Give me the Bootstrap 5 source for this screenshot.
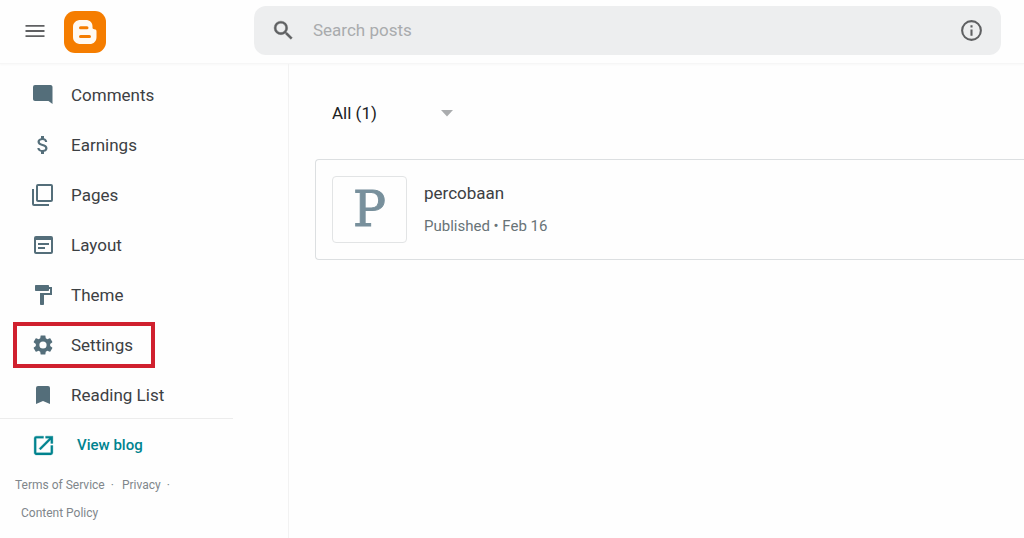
<!DOCTYPE html>
<html lang="en">
<head>
<meta charset="utf-8">
<meta name="viewport" content="width=device-width, initial-scale=1">
<title>Blogger posts</title>
<link href="https://cdn.jsdelivr.net/npm/bootstrap@5.3.0/dist/css/bootstrap.min.css" rel="stylesheet">
<style>
body { font-family: Roboto, sans-serif; font-size: 17px; line-height: 24px; color: #3c4043; background: #fefefe; overflow-x: hidden; }
svg { display: block; fill: currentColor; flex: none; }
.topbar { height: 64px; padding-bottom: 2px; border-bottom: 1px solid #f6f6f6; box-shadow: 0 1px 2px #f8f8f8; }
.brand-area { width: 254px; padding-left: 23px; gap: 17px; }
.topbar .btn { color: #5f6062; }
.logo-link { padding-top: 2px; }
.searchbox { height: 49px; margin-right: 23px; padding: 0 17px; background: #edeeef; border-radius: 12px; color: #5f6062; }
.searchbox input { font-size: 17px; color: #3c4043; margin-left: 17px; }
.searchbox input::placeholder { color: #a9abad; opacity: 1; }
.shell { min-height: calc(100vh - 64px); }
.sidebar { width: 289px; flex: none; border-right: 1px solid #f2f2f2; }
.menu { width: 233px; padding-top: 6px; border-bottom: 1px solid #ececec; }
.menu a { width: fit-content; height: 46px; margin: 2px 0 2px 13px; padding: 0 18px 0 14px; border: 4px solid transparent; gap: 16px; color: #3c4043; }
.menu a:last-child { margin-bottom: 0; }
.menu a.marked { border-color: #d0202e; }
.menu svg { color: #546e7a; }
.view-blog { height: 52px; padding-left: 31px; gap: 21px; color: #00838f; font-size: 15px; font-weight: 500; }
.legal { font-size: 12px; line-height: 28px; color: #80868b; padding-left: 15px; }
.legal a { color: #80868b; }
.legal-part { gap: 6px; }
.legal-last { padding-left: 6px; }
.filter { width: 132px; height: 36px; margin: 31px 0 28px 43px; }
.filter select { appearance: none; color: #202124; padding-right: 24px; }
.filter svg { right: 5px; color: #aaacae; pointer-events: none; }
.post { margin-left: 26px; height: 101px; padding: 16px; gap: 17px; border: 1px solid #dcdfe1; border-right: 0; border-radius: 4px 0 0 4px; color: inherit; }
.post-text { gap: 9px; padding-top: 5px; }
.thumb { width: 75px; height: 67px; border: 1px solid #e2e4e5; border-radius: 4px; font: 49px/1 "DejaVu Serif", serif; color: #78909c; -webkit-text-stroke: 1px #78909c; }
.post-meta { font-size: 15px; color: #687377; }
</style>
</head>
<body>
<header class="topbar d-flex align-items-center">
  <div class="brand-area d-flex align-items-center flex-shrink-0">
    <button type="button" class="btn p-0 border-0" aria-label="Main menu"><svg width="24" height="24" viewBox="0 0 24 24"><path d="M2.500 18h19v-1.800h-19zm0-5.100h19v-1.800h-19zm0-6.900v1.800h19V6z"/></svg></button>
    <a href="#" class="logo-link" aria-label="Blogger"><svg width="42" height="42" viewBox="0 0 42 42"><rect width="42" height="42" rx="11" fill="#f57d00"/><path fill="#fffaf3" d="M17 9h4.500c4.500 0 7 2.700 7 6.200v1.300c0 1.300.6 1.700 1.700 1.700 1.700 0 2.300.8 2.300 2.300v5.500c0 4.300-2.700 7-7 7H17c-5 0-8-2.700-8-7V16c0-4.300 3-7 8-7z"/><path d="M16.500 16.700h6.500M16.500 25.500h9" stroke="#f57d00" stroke-width="3" stroke-linecap="round"/></svg></a>
  </div>
  <form class="searchbox d-flex align-items-center flex-grow-1" role="search">
    <svg width="25" height="25" viewBox="0 0 24 24" aria-hidden="true"><path d="M15.500 14h-.79l-.28-.27A6.470 6.470 0 0 0 16 9.500 6.500 6.500 0 1 0 9.500 16c1.610 0 3.090-.59 4.230-1.570l.27.28v.79l5 4.990L20.490 19zm-6 0a4.500 4.500 0 1 1 0-9 4.500 4.500 0 0 1 0 9z" stroke="currentColor" stroke-width=".4"/></svg>
    <input type="search" class="form-control bg-transparent border-0 shadow-none p-0" placeholder="Search posts" aria-label="Search posts">
    <button type="button" class="btn p-0 border-0" aria-label="Search information"><svg width="25" height="25" viewBox="0 0 24 24"><path d="M11 17h2v-6h-2zm0-8h2V7h-2zm1-7a10 10 0 1 0 0 20 10 10 0 0 0 0-20zm0 18a8 8 0 1 1 0-16 8 8 0 0 1 0 16z"/></svg></button>
  </form>
</header>
<div class="shell d-flex">
  <aside class="sidebar">
    <nav class="menu d-flex flex-column">
      <a href="#" class="d-flex align-items-center text-decoration-none"><svg width="24" height="24" viewBox="0 0 24 24"><path d="M21.500 4c0-1.100-.89-2-1.990-2H4a2 2 0 0 0-2 2v12c0 1.100.9 2 2 2h13.500l4 3z"/></svg>Comments</a>
      <a href="#" class="d-flex align-items-center text-decoration-none"><svg width="24" height="24" viewBox="0 0 24 24"><path d="M11.800 10.900c-2.270-.59-3-1.200-3-2.150 0-1.090 1.010-1.850 2.700-1.850 1.780 0 2.440.85 2.500 2.100h2.210c-.07-1.720-1.120-3.300-3.210-3.810V3h-3v2.160c-1.940.42-3.500 1.680-3.500 3.610 0 2.310 1.910 3.460 4.700 4.130 2.500.6 3 1.480 3 2.410 0 .69-.49 1.790-2.700 1.790-2.060 0-2.870-.92-2.980-2.100h-2.200c.12 2.190 1.760 3.420 3.680 3.830V21h3v-2.150c1.950-.37 3.500-1.500 3.500-3.550 0-2.840-2.430-3.810-4.700-4.400z"/></svg>Earnings</a>
      <a href="#" class="d-flex align-items-center text-decoration-none"><svg width="24" height="24" viewBox="0 0 24 24"><path d="M3 6H1v15a2 2 0 0 0 2 2h15v-2H3zM20 1H7a2 2 0 0 0-2 2v14c0 1.100.9 2 2 2h13a2 2 0 0 0 2-2V3a2 2 0 0 0-2-2zm0 16H7V3h13z"/></svg>Pages</a>
      <a href="#" class="d-flex align-items-center text-decoration-none"><svg width="24" height="24" viewBox="0 0 24 24"><path fill-rule="evenodd" d="M20 3H5a2 2 0 0 0-2 2v14c0 1.100.9 2 2 2h15a2 2 0 0 0 2-2V5a2 2 0 0 0-2-2zm0 16H5V7h15zM18 12H7v-2h11zM14 16H7v-2h7z"/></svg>Layout</a>
      <a href="#" class="d-flex align-items-center text-decoration-none"><svg width="24" height="24" viewBox="0 0 24 24"><path d="M18 4V3c0-.55-.45-1-1-1H5c-.55 0-1 .45-1 1v4c0 .55.45 1 1 1h12c.55 0 1-.45 1-1V6h1v4H9v11c0 .55.45 1 1 1h2c.55 0 1-.45 1-1v-9h8V4z"/></svg>Theme</a>
      <a href="#" class="marked d-flex align-items-center text-decoration-none"><svg width="24" height="24" viewBox="0 0 24 24"><path d="M19.140 12.940c.04-.3.06-.61.06-.94 0-.32-.02-.64-.07-.94l2.030-1.580c.18-.14.23-.41.12-.61l-1.920-3.320c-.12-.22-.37-.29-.59-.22l-2.390.96c-.5-.38-1.030-.7-1.620-.94l-.36-2.540c-.04-.24-.24-.41-.48-.41h-3.840c-.24 0-.43.17-.47.41l-.36 2.540c-.59.24-1.130.57-1.620.94l-2.390-.96c-.22-.08-.47 0-.59.22L2.740 8.870c-.12.21-.08.47.12.61l2.030 1.580c-.05.3-.09.63-.09.94s.02.64.07.94l-2.030 1.580c-.18.14-.23.41-.12.61l1.920 3.320c.12.22.37.29.59.22l2.390-.96c.5.38 1.030.7 1.620.94l.36 2.540c.05.24.24.41.48.41h3.840c.24 0 .44-.17.47-.41l.36-2.540c.59-.24 1.130-.56 1.620-.94l2.390.96c.22.08.47 0 .59-.22l1.920-3.320c.12-.22.07-.47-.12-.61zM12 15.600a3.600 3.600 0 1 1 0-7.200 3.600 3.600 0 0 1 0 7.200z"/></svg>Settings</a>
      <a href="#" class="d-flex align-items-center text-decoration-none"><svg width="24" height="24" viewBox="0 0 24 24"><path d="M17 3H7a2 2 0 0 0-2 2v16l7-3 7 3V5a2 2 0 0 0-2-2z"/></svg>Reading List</a>
    </nav>
    <a href="#" class="view-blog d-flex align-items-center text-decoration-none"><svg width="25" height="25" viewBox="0 0 24 24"><path d="M19 19H5V5h7V3H5a2 2 0 0 0-2 2v14c0 1.100.9 2 2 2h14a2 2 0 0 0 2-2v-7h-2zM14 3v2h3.590l-9.830 9.830 1.410 1.410L19 6.410V10h2V3z" stroke="currentColor" stroke-width=".3"/></svg>View blog</a>
    <footer class="legal">
      <div class="d-flex gap-2"><span class="legal-part d-flex"><a href="#" class="text-decoration-none">Terms of Service</a> <span>·</span></span><span class="legal-part d-flex"><a href="#" class="text-decoration-none">Privacy</a> <span>·</span></span></div>
      <a href="#" class="legal-last text-decoration-none">Content Policy</a>
    </footer>
  </aside>
  <main class="flex-grow-1">
    <div class="filter position-relative d-flex align-items-center">
      <select class="w-100 border-0 bg-transparent p-0" aria-label="Filter posts"><option>All (1)</option></select>
      <svg class="position-absolute" width="24" height="24" viewBox="0 0 24 24"><path d="M6 9l6 6.500L18 9z"/></svg>
    </div>
    <a href="#" class="post d-flex align-items-start text-decoration-none">
      <span class="thumb d-flex align-items-center justify-content-center flex-shrink-0">P</span>
      <span class="d-flex flex-column post-text"><span>percobaan</span><span class="post-meta">Published • Feb 16</span></span>
    </a>
  </main>
</div>
<script src="https://cdn.jsdelivr.net/npm/bootstrap@5.3.0/dist/js/bootstrap.bundle.min.js"></script>
</body>
</html>
